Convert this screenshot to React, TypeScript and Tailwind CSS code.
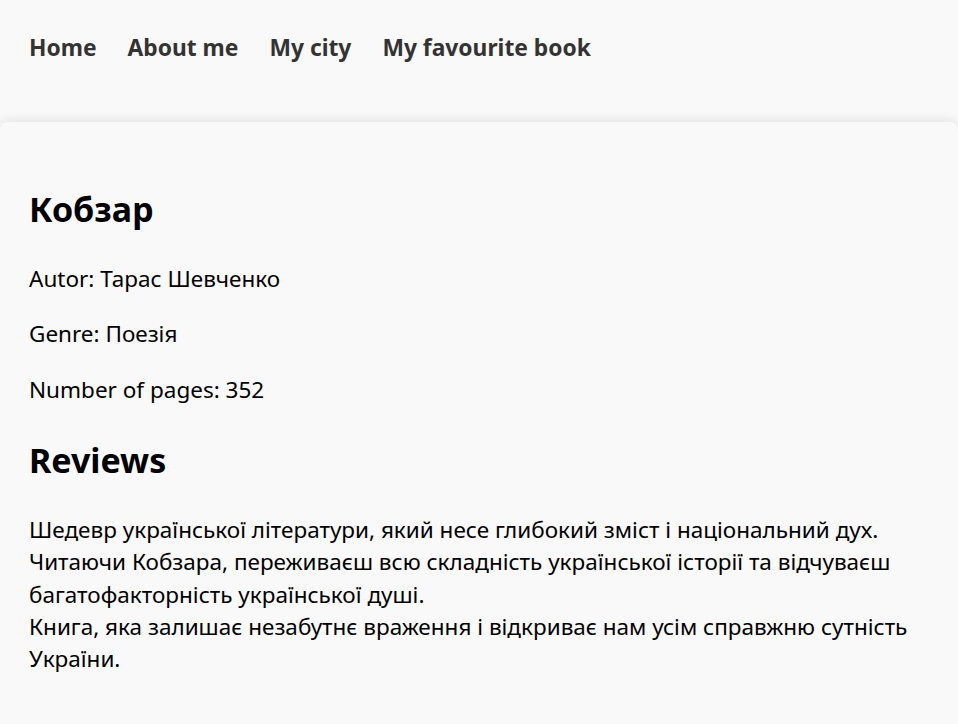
const navLinks = ["Home", "About me", "My city", "My favourite book"];

const reviewLines = [
  "Шедевр української літератури, який несе глибокий зміст і національний дух.",
  "Читаючи Кобзара, переживаєш всю складність української історії та відчуваєш",
  "багатофакторність української душі.",
  "Книга, яка залишає незабутнє враження і відкриває нам усім справжню сутність",
  "України.",
];

export default function App() {
  return (
    <div className="h-[724px] overflow-hidden bg-[#f9f9f9] font-['Noto_Sans',sans-serif] text-black">
      <header className="flex h-[122px] items-start px-[29px] pt-[32px]">
        <nav className="flex gap-[31px]">
          {navLinks.map((link) => (
            <a
              key={link}
              href="#"
              className="text-[22.8px] font-bold leading-[32px] text-[#333]"
            >
              {link}
            </a>
          ))}
        </nav>
      </header>

      <main className="h-[602px] rounded-t-lg bg-[#f9f9f9] px-[29px] pt-[64px] shadow-[0_-3px_10px_rgba(0,0,0,0.08)]">
        <h1 className="text-[34px] font-bold leading-[46px]">Кобзар</h1>
        <p className="mt-[31px] text-[22.5px] leading-[32px]">Autor: Тарас Шевченко</p>
        <p className="mt-[23px] text-[22.5px] leading-[32px]">Genre: Поезія</p>
        <p className="mt-[24px] text-[22.5px] leading-[32px]">Number of pages: 352</p>
        <h2 className="mt-[31px] text-[34px] font-bold leading-[46px]">Reviews</h2>
        <p className="mt-[31px] text-[22.5px] leading-[32.3px]">
          {reviewLines.map((line) => (
            <span key={line} className="block whitespace-nowrap">
              {line}
            </span>
          ))}
        </p>
      </main>
    </div>
  );
}
